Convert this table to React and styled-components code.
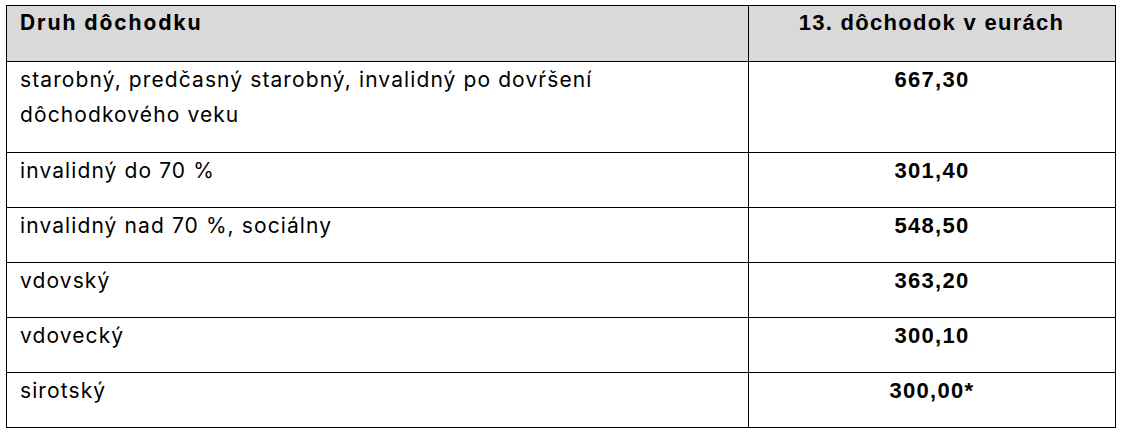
import React from "react";
import styled, { createGlobalStyle } from "styled-components";

const rows = [
  { label: "starobný, predčasný starobný, invalidný po dovŕšení dôchodkového veku", value: "667,30", height: 91 },
  { label: "invalidný do 70 %", value: "301,40" },
  { label: "invalidný nad 70 %, sociálny", value: "548,50" },
  { label: "vdovský", value: "363,20" },
  { label: "vdovecký", value: "300,10" },
  { label: "sirotský", value: "300,00*" },
];

const App = () => {
  return (
    <Page>
      <GlobalStyle />
      <Table>
        <colgroup>
          <col style={{ width: 742 }} />
          <col style={{ width: 367 }} />
        </colgroup>
        <thead>
          <Row $height={56}>
            <HeadCell>Druh dôchodku</HeadCell>
            <HeadCell $center>13. dôchodok v eurách</HeadCell>
          </Row>
        </thead>
        <tbody>
          {rows.map((r, i) => (
            <Row key={i} $height={r.height || 55}>
              <Label>{r.label}</Label>
              <Amount>{r.value}</Amount>
            </Row>
          ))}
        </tbody>
      </Table>
    </Page>
  );
};

export default App;

const GlobalStyle = createGlobalStyle`
  body {
    margin: 0;
    background: #ffffff;
  }
`;

const Page = styled.div`
  padding: 5px 6px;
  background: #ffffff;
`;

const Table = styled.table`
  border-collapse: collapse;
  table-layout: fixed;
  width: 1110px;
  color: #000000;
`;

const Row = styled.tr`
  height: ${(p) => p.$height}px;
`;

const HeadCell = styled.th`
  background: #d9d9d9;
  border: 1px solid #000000;
  vertical-align: top;
  padding: 2px 14px 0 13px;
  text-align: ${(p) => (p.$center ? "center" : "left")};
  font-family: ${(p) => (p.$center ? '"Liberation Sans", Arial' : "Inter")}, sans-serif;
  font-weight: 700;
  font-size: ${(p) => (p.$center ? 22 : 21)}px;
  letter-spacing: ${(p) => (p.$center ? 1.3 : 1.9)}px;
  line-height: 30px;
`;

const Label = styled.td`
  border: 1px solid #000000;
  vertical-align: top;
  padding: 0 14px 0 13px;
  font-family: Inter, sans-serif;
  font-size: 21px;
  letter-spacing: 1.1px;
  line-height: 35px;
`;

const Amount = styled.td`
  border: 1px solid #000000;
  vertical-align: top;
  padding: 0 10px;
  text-align: center;
  font-family: "Liberation Sans", Arial, sans-serif;
  font-weight: 700;
  font-size: 22px;
  letter-spacing: 1.3px;
  line-height: 35px;
`;
